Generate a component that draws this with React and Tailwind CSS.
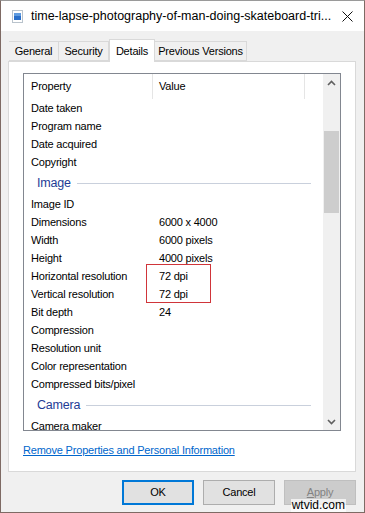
const rows = [
  { label: 'Date taken' },
  { label: 'Program name' },
  { label: 'Date acquired' },
  { label: 'Copyright' },
  { group: 'Image' },
  { label: 'Image ID' },
  { label: 'Dimensions', value: '6000 x 4000' },
  { label: 'Width', value: '6000 pixels' },
  { label: 'Height', value: '4000 pixels' },
  { label: 'Horizontal resolution', value: '72 dpi' },
  { label: 'Vertical resolution', value: '72 dpi' },
  { label: 'Bit depth', value: '24' },
  { label: 'Compression' },
  { label: 'Resolution unit' },
  { label: 'Color representation' },
  { label: 'Compressed bits/pixel' },
  { group: 'Camera' },
  { label: 'Camera maker' },
]

const tabs = [
  { label: 'General', w: 'w-[50px] border-l' },
  { label: 'Security', w: 'w-[50px]' },
  { label: 'Details', w: 'w-[46px]', active: true },
  { label: 'Previous Versions', w: 'w-[92px]' },
]

function FileIcon() {
  return (
    <svg width="11" height="13" viewBox="0 0 11 13">
      <rect x="0.5" y="0.5" width="10" height="12" fill="#fff" stroke="#b9c3cc" />
      <rect x="2" y="3" width="7" height="7" fill="#2a6fc9" />
      <rect x="2" y="3" width="7" height="3" fill="#5f9be0" />
    </svg>
  )
}

function Row({ row }) {
  if (row.group) {
    return (
      <div className="flex h-[24px] items-center pl-[13px] pr-[12px]">
        <span className="text-[12.5px] text-[#1e3c96]">{row.group}</span>
        <div className="ml-[6px] h-px flex-1 bg-[#c9d0dc]" />
      </div>
    )
  }
  return (
    <div className="flex h-[18px] items-center">
      <span className="w-[135px] pl-[7px]">{row.label}</span>
      <span>{row.value}</span>
    </div>
  )
}

export default function App() {
  return (
    <div
      className="relative flex h-[513px] w-[365px] flex-col border border-[#7e6a64] border-t-[#9a9a9a] bg-[#f0f0f0] text-[11px] tracking-[-0.2px] text-black"
      style={{ fontFamily: '"Liberation Sans", Arial, sans-serif' }}
    >
      <div className="flex h-[30px] items-center bg-white pl-[11px] pr-[11px]">
        <FileIcon />
        <span className="ml-[8px] flex-1 whitespace-nowrap text-[12.5px] leading-none tracking-normal">
          time-lapse-photography-of-man-doing-skateboard-tri...
        </span>
        <svg width="11" height="11" viewBox="0 0 11 11" className="mb-[-1px]">
          <path d="M0.5 0.5 L10.5 10.5 M10.5 0.5 L0.5 10.5" stroke="#111" strokeWidth="1" />
        </svg>
      </div>

      <div className="flex pl-[8px] pt-[10px]">
        {tabs.map((t) =>
          t.active ? (
            <div
              key={t.label}
              className={`relative z-10 -mt-[2px] -mb-px flex h-[23px] items-start justify-center border border-b-0 border-[#d9d9d9] bg-white pt-[3px] ${t.w}`}
            >
              {t.label}
            </div>
          ) : (
            <div
              key={t.label}
              className={`flex h-[20px] items-center justify-center border border-l-0 border-[#d9d9d9] bg-[#f0f0f0] ${t.w}`}
            >
              {t.label}
            </div>
          ),
        )}
      </div>

      <div className="ml-[7px] flex h-[411px] w-[348px] flex-col border border-[#d9d9d9] bg-white">
        <div className="ml-[14px] mt-[11px] flex h-[358px] w-[318px] border border-[#828790]">
          <div className="flex-1 overflow-hidden">
            <div className="flex h-[25px] items-center">
              <span className="w-[128px] pl-[7px]">Property</span>
              <div className="h-[25px] w-px bg-[#e5e5e5]" />
              <span className="w-[151px] pl-[6px]">Value</span>
              <div className="h-[25px] w-px bg-[#e5e5e5]" />
            </div>
            {rows.map((r, i) => (
              <Row key={i} row={r} />
            ))}
          </div>
          <div className="flex w-[17px] flex-col bg-[#f0f0f0]">
            <div className="flex h-[17px] items-center justify-center">
              <svg width="9" height="6" viewBox="0 0 9 6">
                <path d="M1 5 L4.5 1.5 L8 5" fill="none" stroke="#606060" strokeWidth="1.6" />
              </svg>
            </div>
            <div className="h-[40px]" />
            <div className="mx-[1px] h-[82px] bg-[#cdcdcd]" />
            <div className="flex-1" />
            <div className="flex h-[17px] items-center justify-center">
              <svg width="9" height="6" viewBox="0 0 9 6">
                <path d="M1 1 L4.5 4.5 L8 1" fill="none" stroke="#606060" strokeWidth="1.6" />
              </svg>
            </div>
          </div>
        </div>
        <div className="ml-[14px] mt-[11px] text-[#0066cc] underline">
          Remove Properties and Personal Information
        </div>
      </div>

      <div className="mt-[8px] flex justify-end gap-[9px] pr-[8px]">
        <button className="flex h-[25px] w-[72px] items-center justify-center border-2 border-[#0078d7] bg-[#e1e1e1]">
          OK
        </button>
        <button className="flex h-[25px] w-[72px] items-center justify-center border border-[#adadad] bg-[#e1e1e1]">
          Cancel
        </button>
        <button className="flex h-[25px] w-[72px] items-center justify-center border border-[#bfbfbf] bg-[#cccccc] text-[#838383]">
          <span className="underline">A</span>pply
        </button>
      </div>

      <div className="pointer-events-none absolute left-[145px] top-[263px] h-[39px] w-[65px] border border-[#d0353a]" />
      <span className="absolute bottom-[0px] right-[18px] bg-white/70 px-[1px] text-[12px] leading-[13px] tracking-normal text-black">
        wtvid.com
      </span>
    </div>
  )
}
